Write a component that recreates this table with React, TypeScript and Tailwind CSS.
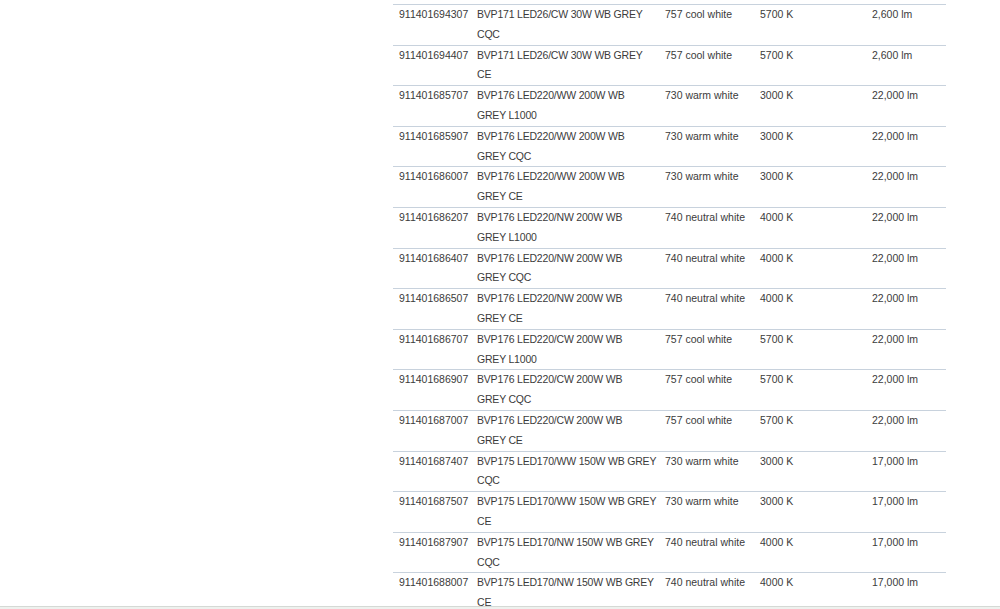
import React from 'react';

interface Row {
  code: string;
  name: [string, string];
  colour: string;
  temp: string;
  flux: string;
}

const rows: Row[] = [
  { code: '911401694307', name: ['BVP171 LED26/CW 30W WB GREY', 'CQC'], colour: '757 cool white', temp: '5700 K', flux: '2,600 lm' },
  { code: '911401694407', name: ['BVP171 LED26/CW 30W WB GREY', 'CE'], colour: '757 cool white', temp: '5700 K', flux: '2,600 lm' },
  { code: '911401685707', name: ['BVP176 LED220/WW 200W WB', 'GREY L1000'], colour: '730 warm white', temp: '3000 K', flux: '22,000 lm' },
  { code: '911401685907', name: ['BVP176 LED220/WW 200W WB', 'GREY CQC'], colour: '730 warm white', temp: '3000 K', flux: '22,000 lm' },
  { code: '911401686007', name: ['BVP176 LED220/WW 200W WB', 'GREY CE'], colour: '730 warm white', temp: '3000 K', flux: '22,000 lm' },
  { code: '911401686207', name: ['BVP176 LED220/NW 200W WB', 'GREY L1000'], colour: '740 neutral white', temp: '4000 K', flux: '22,000 lm' },
  { code: '911401686407', name: ['BVP176 LED220/NW 200W WB', 'GREY CQC'], colour: '740 neutral white', temp: '4000 K', flux: '22,000 lm' },
  { code: '911401686507', name: ['BVP176 LED220/NW 200W WB', 'GREY CE'], colour: '740 neutral white', temp: '4000 K', flux: '22,000 lm' },
  { code: '911401686707', name: ['BVP176 LED220/CW 200W WB', 'GREY L1000'], colour: '757 cool white', temp: '5700 K', flux: '22,000 lm' },
  { code: '911401686907', name: ['BVP176 LED220/CW 200W WB', 'GREY CQC'], colour: '757 cool white', temp: '5700 K', flux: '22,000 lm' },
  { code: '911401687007', name: ['BVP176 LED220/CW 200W WB', 'GREY CE'], colour: '757 cool white', temp: '5700 K', flux: '22,000 lm' },
  { code: '911401687407', name: ['BVP175 LED170/WW 150W WB GREY', 'CQC'], colour: '730 warm white', temp: '3000 K', flux: '17,000 lm' },
  { code: '911401687507', name: ['BVP175 LED170/WW 150W WB GREY', 'CE'], colour: '730 warm white', temp: '3000 K', flux: '17,000 lm' },
  { code: '911401687907', name: ['BVP175 LED170/NW 150W WB GREY', 'CQC'], colour: '740 neutral white', temp: '4000 K', flux: '17,000 lm' },
  { code: '911401688007', name: ['BVP175 LED170/NW 150W WB GREY', 'CE'], colour: '740 neutral white', temp: '4000 K', flux: '17,000 lm' },
];

const App: React.FC = () => {
  return (
    <div className="relative h-[609px] w-[1000px] overflow-hidden bg-white font-['Liberation_Sans',Arial,sans-serif] text-[10.5px] leading-[19.8px] text-[#3b3b3b]">
      <div className="flex pt-[4px]">
        <div className="w-[393px] shrink-0" />

        {/* spec table */}
        <div className="w-[553px] shrink-0">
          {rows.map((row) => (
            <div key={row.code} className="flex border-t border-[#c8d2dd]">
              <div className="w-[84px] shrink-0 pl-[6px] whitespace-nowrap">{row.code}</div>
              <div className="w-[188px] shrink-0 whitespace-nowrap tracking-[-0.2px]">
                <div>{row.name[0]}</div>
                <div>{row.name[1]}</div>
              </div>
              <div className="w-[95px] shrink-0 whitespace-nowrap">{row.colour}</div>
              <div className="w-[112px] shrink-0 whitespace-nowrap">{row.temp}</div>
              <div className="w-[74px] shrink-0 whitespace-nowrap">{row.flux}</div>
            </div>
          ))}
        </div>
      </div>

      {/* window edge at the bottom */}
      <div className="absolute bottom-0 left-0 right-0 h-[3px] border-t border-[#d5d9d5] bg-[#eef1ee]" />
    </div>
  );
};

export default App;
